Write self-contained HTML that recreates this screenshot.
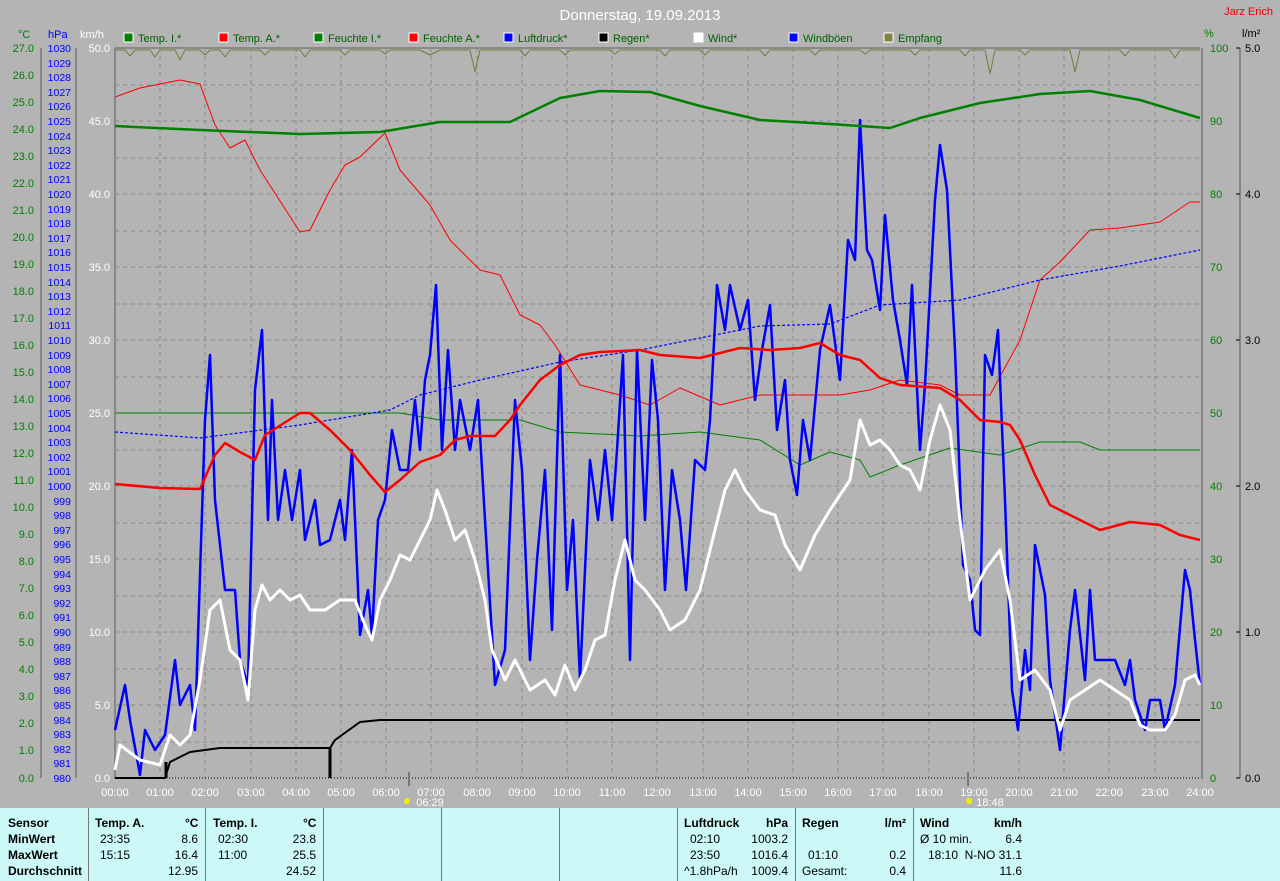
<!DOCTYPE html>
<html><head><meta charset="utf-8"><style>
body{margin:0;width:1280px;height:881px;background:#b4b4b4;overflow:hidden;font-family:"Liberation Sans",sans-serif}
svg{position:absolute;left:0;top:0}
#tbl{position:absolute;left:0;top:808px;width:1280px;height:73px;background:#ccf8f8;font-size:12px;color:#000}
#tbl div{position:absolute}
.b{font-weight:bold}
.v{position:absolute;top:0;width:1px;height:73px;background:#777}
</style></head><body>
<svg width="1280" height="808" font-family="Liberation Sans, sans-serif" font-size="11">
<text x="640" y="20" fill="#fff" font-size="15" text-anchor="middle">Donnerstag, 19.09.2013</text>
<text x="1273" y="15" fill="#e00" font-size="11" text-anchor="end">Jarz Erich</text>
<g stroke="#888" stroke-dasharray="4,4" stroke-width="1">
<path d="M160 48V778M205 48V778M251 48V778M296 48V778M341 48V778M386 48V778M431 48V778M477 48V778M522 48V778M567 48V778M612 48V778M657 48V778M703 48V778M748 48V778M793 48V778M838 48V778M883 48V778M929 48V778M974 48V778M1019 48V778M1064 48V778M1109 48V778M1155 48V778"/>
<path d="M115 85H1200M115 121H1200M115 158H1200M115 194H1200M115 231H1200M115 267H1200M115 304H1200M115 340H1200M115 377H1200M115 413H1200M115 450H1200M115 486H1200M115 523H1200M115 559H1200M115 596H1200M115 632H1200M115 669H1200M115 705H1200M115 742H1200"/>
</g>
<path d="M115 48V779M115 48H1200" stroke="#888" stroke-width="2" fill="none"/>
<path d="M115 778H1200" stroke="#000" stroke-dasharray="1,2"/>
<path d="M1202 48V779M1240 48V778M41 48V778M76 48V778" stroke="#777" stroke-width="1.5"/>
<g fill="none" stroke-linejoin="round">
<polyline stroke="#7a7a3a" stroke-width="1" points="115,50 125,50 130,56 135,50 150,50 155,57 160,50 175,50 180,60 185,50 200,50 205,55 210,50 220,50 225,57 230,50 260,50 265,55 270,50 300,50 305,57 310,50 340,50 345,55 350,50 380,50 385,54 390,50 420,50 430,55 440,50 470,50 475,72 480,50 520,50 525,56 530,50 560,50 565,55 570,50 610,50 615,54 620,50 660,50 665,56 670,50 700,50 705,55 710,50 760,50 765,56 770,50 810,50 815,55 820,50 860,50 865,54 870,50 910,50 915,55 920,50 960,50 965,56 970,50 985,50 990,74 995,50 1020,50 1025,55 1030,50 1070,50 1075,72 1080,50 1120,50 1125,56 1130,50 1170,50 1175,58 1180,50 1200,50"/>
<polyline stroke="#008000" stroke-width="1" points="115,413 400,413 440,420 520,420 560,432 640,436 700,432 760,440 800,465 830,452 860,460 870,477 900,465 950,448 1000,455 1040,442 1080,442 1100,450 1200,450"/>
<polyline stroke="#f00" stroke-width="1" points="115,97 140,88 180,80 200,84 215,125 230,148 245,140 260,170 300,232 310,230 330,190 345,165 360,157 385,133 400,170 430,205 450,240 480,270 500,275 520,315 540,325 555,345 580,385 620,395 650,405 680,388 720,405 760,395 800,395 840,395 870,390 900,380 940,385 960,395 990,395 1020,340 1040,280 1060,262 1090,230 1120,228 1160,222 1190,202 1200,202"/>
<polyline stroke="#00f" stroke-width="1.2" stroke-dasharray="3,2" points="115,432 200,438 300,425 390,410 420,395 480,380 560,362 640,350 760,326 830,324 880,305 960,300 1040,280 1120,266 1200,250"/>
<polyline stroke="#000" stroke-width="2" points="115,778 165,778 170,762 190,752 220,748 330,748 335,740 360,722 380,720 1200,720"/>
<path d="M166 762V778M330 748V778" stroke="#000" stroke-width="3"/>
<polyline stroke="#00f" stroke-width="2.5" points="115,730 125,685 130,720 140,775 145,730 155,750 165,735 175,660 180,705 190,685 195,730 205,420 210,355 215,500 225,590 235,590 240,660 248,685 255,390 262,330 268,520 272,400 278,520 285,470 292,520 300,470 305,540 315,500 320,545 330,540 340,500 345,540 352,450 360,635 368,590 372,635 378,520 385,500 392,430 400,470 408,470 415,400 420,450 425,380 430,355 436,285 442,450 448,350 455,450 460,400 470,450 478,400 485,520 495,685 505,650 515,400 522,470 530,660 537,560 545,470 552,630 560,355 567,590 573,520 580,680 590,460 598,520 605,450 612,520 617,450 623,355 630,660 637,350 645,520 652,360 658,420 665,590 672,470 680,520 686,590 695,460 705,470 710,420 717,285 725,330 730,285 740,330 748,300 755,400 762,350 770,305 777,430 785,380 790,460 797,495 803,420 810,460 820,350 830,305 840,380 848,240 855,260 860,120 867,250 872,260 880,310 885,215 893,300 900,340 907,385 912,285 920,450 925,385 935,200 940,145 947,190 955,350 963,565 970,580 975,630 980,635 985,355 992,375 998,330 1005,500 1012,690 1018,730 1025,650 1030,690 1035,545 1045,595 1050,680 1060,750 1070,630 1075,590 1085,680 1090,590 1095,660 1115,660 1125,685 1130,660 1135,700 1145,730 1150,700 1160,700 1165,730 1175,685 1185,570 1190,590 1195,640 1200,685"/>
<polyline stroke="#fff" stroke-width="3" points="115,770 120,745 140,760 160,765 170,735 180,745 190,735 200,680 210,610 220,600 230,650 240,660 248,700 255,610 262,585 270,600 280,590 290,600 300,595 310,610 325,610 340,600 355,600 365,625 372,640 380,600 390,580 400,555 410,560 420,540 430,520 437,490 445,510 455,540 465,530 475,560 485,600 492,650 505,680 515,660 530,690 545,680 555,695 565,665 575,690 585,670 595,640 605,635 615,580 625,540 635,580 645,590 660,610 670,630 685,620 700,590 710,550 725,490 735,470 745,490 760,510 775,515 785,545 800,570 815,535 830,510 850,480 860,420 870,445 880,440 890,450 900,465 910,470 920,490 930,440 940,405 950,430 960,520 970,600 985,570 1000,550 1010,600 1020,680 1035,670 1050,690 1060,730 1070,700 1085,690 1100,680 1115,690 1130,700 1140,725 1150,730 1165,730 1175,715 1185,680 1195,675 1200,685"/>
<polyline stroke="#f00" stroke-width="2.5" points="115,484 160,488 200,489 215,455 225,443 240,452 255,460 265,435 300,413 310,413 330,430 350,450 370,475 385,492 400,480 420,462 440,455 455,440 470,436 495,436 510,420 520,405 540,380 560,365 580,355 600,352 640,350 660,355 700,358 740,348 770,350 800,348 820,343 840,355 860,360 880,378 900,385 940,388 960,400 980,420 1000,422 1010,425 1020,440 1035,475 1050,505 1080,520 1100,530 1130,522 1160,525 1180,535 1200,540"/>
<polyline stroke="#008000" stroke-width="2.5" points="115,126 200,130 300,134 380,132 440,122 510,122 560,98 600,91 650,92 700,106 760,120 830,124 890,128 920,118 980,103 1040,94 1090,91 1140,100 1200,118"/>
</g>
<g font-size="11">
<rect x="124" y="33" width="9" height="9" fill="#008000" stroke="#fff"/><text x="138" y="42" fill="#006000">Temp. I.*</text>
<rect x="219" y="33" width="9" height="9" fill="#f00" stroke="#fff"/><text x="233" y="42" fill="#006000">Temp. A.*</text>
<rect x="314" y="33" width="9" height="9" fill="#008000" stroke="#fff"/><text x="328" y="42" fill="#006000">Feuchte I.*</text>
<rect x="409" y="33" width="9" height="9" fill="#f00" stroke="#fff"/><text x="423" y="42" fill="#006000">Feuchte A.*</text>
<rect x="504" y="33" width="9" height="9" fill="#00f" stroke="#fff"/><text x="518" y="42" fill="#006000">Luftdruck*</text>
<rect x="599" y="33" width="9" height="9" fill="#000" stroke="#fff"/><text x="613" y="42" fill="#006000">Regen*</text>
<rect x="694" y="33" width="9" height="9" fill="#fff" stroke="#fff"/><text x="708" y="42" fill="#006000">Wind*</text>
<rect x="789" y="33" width="9" height="9" fill="#00f" stroke="#fff"/><text x="803" y="42" fill="#006000">Windböen</text>
<rect x="884" y="33" width="9" height="9" fill="#808040" stroke="#fff"/><text x="898" y="42" fill="#006000">Empfang</text>
<text x="18" y="38" fill="#008000">°C</text><text x="48" y="38" fill="#00f">hPa</text><text x="80" y="38" fill="#fff">km/h</text>
<text x="1204" y="37" fill="#008000">%</text><text x="1242" y="37" fill="#000">l/m²</text>
</g>
<g font-size="11" fill="#008000" text-anchor="end">
<text x="34" y="52">27.0</text><text x="34" y="79">26.0</text><text x="34" y="106">25.0</text><text x="34" y="133">24.0</text><text x="34" y="160">23.0</text><text x="34" y="187">22.0</text><text x="34" y="214">21.0</text><text x="34" y="241">20.0</text><text x="34" y="268">19.0</text><text x="34" y="295">18.0</text><text x="34" y="322">17.0</text><text x="34" y="349">16.0</text><text x="34" y="376">15.0</text><text x="34" y="403">14.0</text><text x="34" y="430">13.0</text><text x="34" y="457">12.0</text><text x="34" y="484">11.0</text><text x="34" y="511">10.0</text><text x="34" y="538">9.0</text><text x="34" y="565">8.0</text><text x="34" y="592">7.0</text><text x="34" y="619">6.0</text><text x="34" y="646">5.0</text><text x="34" y="673">4.0</text><text x="34" y="700">3.0</text><text x="34" y="727">2.0</text><text x="34" y="754">1.0</text><text x="34" y="782">0.0</text>
</g>
<g font-size="10.5" fill="#00f" text-anchor="end">
<text x="71" y="52">1030</text><text x="71" y="67">1029</text><text x="71" y="81">1028</text><text x="71" y="96">1027</text><text x="71" y="110">1026</text><text x="71" y="125">1025</text><text x="71" y="140">1024</text><text x="71" y="154">1023</text><text x="71" y="169">1022</text><text x="71" y="183">1021</text><text x="71" y="198">1020</text><text x="71" y="213">1019</text><text x="71" y="227">1018</text><text x="71" y="242">1017</text><text x="71" y="256">1016</text><text x="71" y="271">1015</text><text x="71" y="286">1014</text><text x="71" y="300">1013</text><text x="71" y="315">1012</text><text x="71" y="329">1011</text><text x="71" y="344">1010</text><text x="71" y="359">1009</text><text x="71" y="373">1008</text><text x="71" y="388">1007</text><text x="71" y="402">1006</text><text x="71" y="417">1005</text><text x="71" y="432">1004</text><text x="71" y="446">1003</text><text x="71" y="461">1002</text><text x="71" y="475">1001</text><text x="71" y="490">1000</text><text x="71" y="505">999</text><text x="71" y="519">998</text><text x="71" y="534">997</text><text x="71" y="548">996</text><text x="71" y="563">995</text><text x="71" y="578">994</text><text x="71" y="592">993</text><text x="71" y="607">992</text><text x="71" y="621">991</text><text x="71" y="636">990</text><text x="71" y="651">989</text><text x="71" y="665">988</text><text x="71" y="680">987</text><text x="71" y="694">986</text><text x="71" y="709">985</text><text x="71" y="724">984</text><text x="71" y="738">983</text><text x="71" y="753">982</text><text x="71" y="767">981</text><text x="71" y="782">980</text>
</g>
<g font-size="11" fill="#fff" text-anchor="end">
<text x="110" y="52">50.0</text><text x="110" y="125">45.0</text><text x="110" y="198">40.0</text><text x="110" y="271">35.0</text><text x="110" y="344">30.0</text><text x="110" y="417">25.0</text><text x="110" y="490">20.0</text><text x="110" y="563">15.0</text><text x="110" y="636">10.0</text><text x="110" y="709">5.0</text><text x="110" y="782">0.0</text>
</g>
<g font-size="11" fill="#008000">
<text x="1210" y="52">100</text><text x="1210" y="125">90</text><text x="1210" y="198">80</text><text x="1210" y="271">70</text><text x="1210" y="344">60</text><text x="1210" y="417">50</text><text x="1210" y="490">40</text><text x="1210" y="563">30</text><text x="1210" y="636">20</text><text x="1210" y="709">10</text><text x="1210" y="782">0</text>
</g>
<g font-size="11" fill="#000">
<text x="1245" y="52">5.0</text><text x="1245" y="198">4.0</text><text x="1245" y="344">3.0</text><text x="1245" y="490">2.0</text><text x="1245" y="636">1.0</text><text x="1245" y="782">0.0</text>
</g>
<path d="M1240 48h-4M1240 194h-4M1240 340h-4M1240 486h-4M1240 632h-4M1240 778h-4" stroke="#000"/>
<g font-size="11" fill="#fff" text-anchor="middle">
<text x="115" y="796">00:00</text><text x="160" y="796">01:00</text><text x="205" y="796">02:00</text><text x="251" y="796">03:00</text><text x="296" y="796">04:00</text><text x="341" y="796">05:00</text><text x="386" y="796">06:00</text><text x="431" y="796">07:00</text><text x="477" y="796">08:00</text><text x="522" y="796">09:00</text><text x="567" y="796">10:00</text><text x="612" y="796">11:00</text><text x="657" y="796">12:00</text><text x="703" y="796">13:00</text><text x="748" y="796">14:00</text><text x="793" y="796">15:00</text><text x="838" y="796">16:00</text><text x="883" y="796">17:00</text><text x="929" y="796">18:00</text><text x="974" y="796">19:00</text><text x="1019" y="796">20:00</text><text x="1064" y="796">21:00</text><text x="1109" y="796">22:00</text><text x="1155" y="796">23:00</text><text x="1200" y="796">24:00</text>
<text x="430" y="806">06:29</text><text x="990" y="806">18:48</text>
</g>
<path d="M409 772V786M968 772V786" stroke="#777" stroke-width="2"/>
<circle cx="407" cy="801" r="3" fill="#ee0"/><circle cx="969" cy="801" r="3" fill="#ee0"/>
</svg>
<div id="tbl">
<div class="v" style="left:88px"></div><div class="v" style="left:205px"></div><div class="v" style="left:323px"></div><div class="v" style="left:441px"></div><div class="v" style="left:559px"></div><div class="v" style="left:677px"></div><div class="v" style="left:795px"></div><div class="v" style="left:913px"></div>
<div class="b" style="left:8px;top:8px">Sensor</div><div class="b" style="left:8px;top:24px">MinWert</div><div class="b" style="left:8px;top:40px">MaxWert</div><div class="b" style="left:8px;top:56px">Durchschnitt</div>
<div class="b" style="left:95px;top:8px">Temp. A.</div><div class="b" style="left:185px;top:8px">°C</div>
<div style="left:100px;top:24px">23:35</div><div style="right:1082px;top:24px">8.6</div>
<div style="left:100px;top:40px">15:15</div><div style="right:1082px;top:40px">16.4</div>
<div style="right:1082px;top:56px">12.95</div>
<div class="b" style="left:213px;top:8px">Temp. I.</div><div class="b" style="left:303px;top:8px">°C</div>
<div style="left:218px;top:24px">02:30</div><div style="right:964px;top:24px">23.8</div>
<div style="left:218px;top:40px">11:00</div><div style="right:964px;top:40px">25.5</div>
<div style="right:964px;top:56px">24.52</div>
<div class="b" style="left:684px;top:8px">Luftdruck</div><div class="b" style="right:492px;top:8px">hPa</div>
<div style="left:690px;top:24px">02:10</div><div style="right:492px;top:24px">1003.2</div>
<div style="left:690px;top:40px">23:50</div><div style="right:492px;top:40px">1016.4</div>
<div style="left:684px;top:56px">^1.8hPa/h</div><div style="right:492px;top:56px">1009.4</div>
<div class="b" style="left:802px;top:8px">Regen</div><div class="b" style="right:374px;top:8px">l/m²</div>
<div style="left:808px;top:40px">01:10</div><div style="right:374px;top:40px">0.2</div>
<div style="left:802px;top:56px">Gesamt:</div><div style="right:374px;top:56px">0.4</div>
<div class="b" style="left:920px;top:8px">Wind</div><div class="b" style="right:258px;top:8px">km/h</div>
<div style="left:920px;top:24px">Ø 10 min.</div><div style="right:258px;top:24px">6.4</div>
<div style="left:928px;top:40px">18:10</div><div style="right:258px;top:40px">N-NO 31.1</div>
<div style="right:258px;top:56px">11.6</div>
</div>
</body></html>
